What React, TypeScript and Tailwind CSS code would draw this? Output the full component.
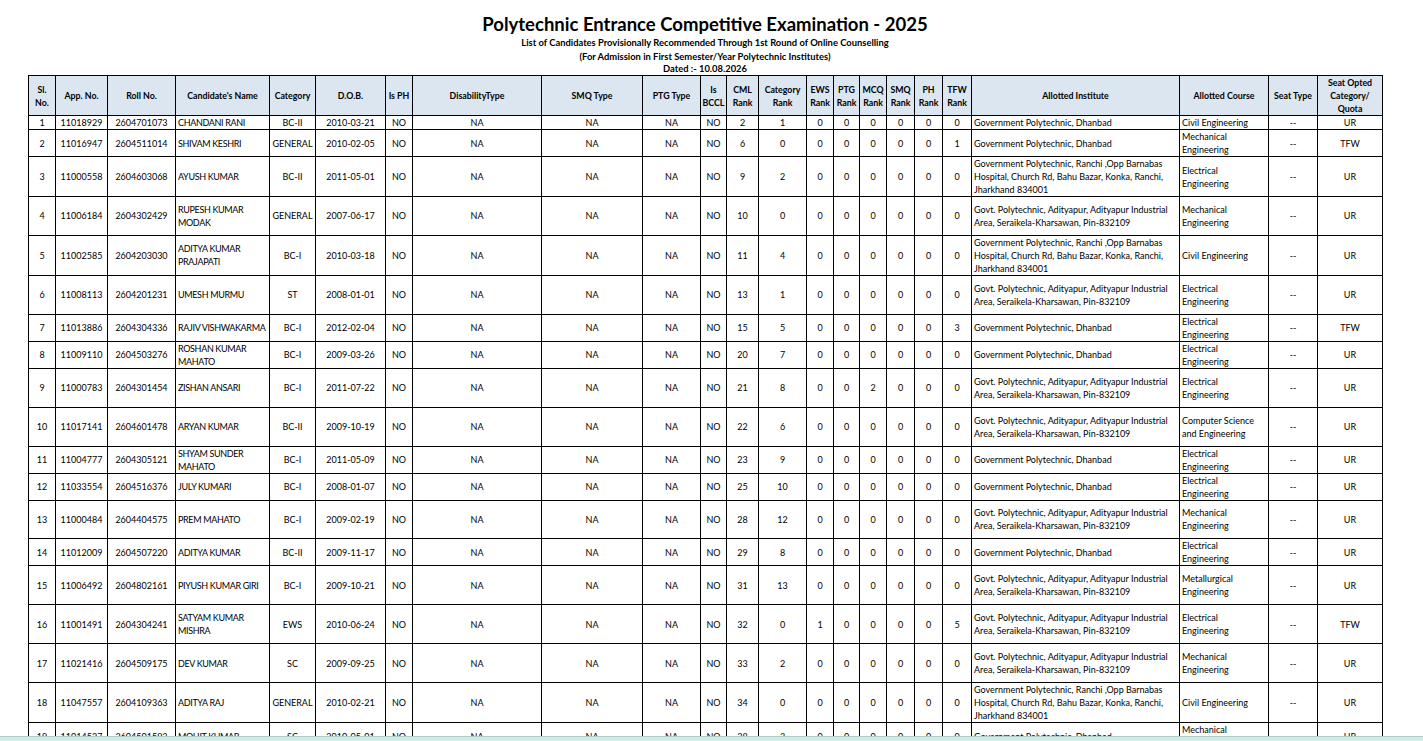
import React from "react";

type Col = { w: string; a: "c" | "l" };

const cols: Col[] = [
  { w: "w-[27px]", a: "c" },
  { w: "w-[52px]", a: "c" },
  { w: "w-[68px]", a: "c" },
  { w: "w-[94px]", a: "l" },
  { w: "w-[46px]", a: "c" },
  { w: "w-[70px]", a: "c" },
  { w: "w-[27px]", a: "c" },
  { w: "w-[129px]", a: "c" },
  { w: "w-[101px]", a: "c" },
  { w: "w-[58px]", a: "c" },
  { w: "w-[26px]", a: "c" },
  { w: "w-[32px]", a: "c" },
  { w: "w-[48px]", a: "c" },
  { w: "w-[27px]", a: "c" },
  { w: "w-[26px]", a: "c" },
  { w: "w-[27px]", a: "c" },
  { w: "w-[28px]", a: "c" },
  { w: "w-[28px]", a: "c" },
  { w: "w-[29px]", a: "c" },
  { w: "w-[208px]", a: "l" },
  { w: "w-[89px]", a: "l" },
  { w: "w-[49px]", a: "c" },
  { w: "w-[65px]", a: "c" },
];

const headers = [
  "Sl.\nNo.",
  "App. No.",
  "Roll No.",
  "Candidate's Name",
  "Category",
  "D.O.B.",
  "Is PH",
  "DisabilityType",
  "SMQ Type",
  "PTG Type",
  "Is\nBCCL",
  "CML\nRank",
  "Category\nRank",
  "EWS\nRank",
  "PTG\nRank",
  "MCQ\nRank",
  "SMQ\nRank",
  "PH\nRank",
  "TFW\nRank",
  "Allotted Institute",
  "Allotted Course",
  "Seat Type",
  "Seat Opted\nCategory/\nQuota",
];

const D = "Government Polytechnic, Dhanbad";
const R =
  "Government Polytechnic, Ranchi ,Opp Barnabas\nHospital, Church Rd, Bahu Bazar, Konka, Ranchi,\nJharkhand 834001";
const A =
  "Govt. Polytechnic, Adityapur, Adityapur Industrial\nArea, Seraikela-Kharsawan, Pin-832109";

const CIV = "Civil Engineering";
const MECH = "Mechanical\nEngineering";
const ELEC = "Electrical\nEngineering";
const CSE = "Computer Science\nand Engineering";
const MET = "Metallurgical\nEngineering";

type Row = {
  h: 1 | 2 | 3;
  sl: string;
  app: string;
  roll: string;
  name: string;
  cat: string;
  dob: string;
  cml: string;
  crank: string;
  ranks: string[];
  inst: string;
  course: string;
  quota: string;
};

const rows: Row[] = [
  { h: 1, sl: "1", app: "11018929", roll: "2604701073", name: "CHANDANI RANI", cat: "BC-II", dob: "2010-03-21", cml: "2", crank: "1", ranks: ["0", "0", "0", "0", "0", "0"], inst: D, course: CIV, quota: "UR" },
  { h: 2, sl: "2", app: "11016947", roll: "2604511014", name: "SHIVAM KESHRI", cat: "GENERAL", dob: "2010-02-05", cml: "6", crank: "0", ranks: ["0", "0", "0", "0", "0", "1"], inst: D, course: MECH, quota: "TFW" },
  { h: 3, sl: "3", app: "11000558", roll: "2604603068", name: "AYUSH KUMAR", cat: "BC-II", dob: "2011-05-01", cml: "9", crank: "2", ranks: ["0", "0", "0", "0", "0", "0"], inst: R, course: ELEC, quota: "UR" },
  { h: 3, sl: "4", app: "11006184", roll: "2604302429", name: "RUPESH KUMAR\nMODAK", cat: "GENERAL", dob: "2007-06-17", cml: "10", crank: "0", ranks: ["0", "0", "0", "0", "0", "0"], inst: A, course: MECH, quota: "UR" },
  { h: 3, sl: "5", app: "11002585", roll: "2604203030", name: "ADITYA KUMAR\nPRAJAPATI", cat: "BC-I", dob: "2010-03-18", cml: "11", crank: "4", ranks: ["0", "0", "0", "0", "0", "0"], inst: R, course: CIV, quota: "UR" },
  { h: 3, sl: "6", app: "11008113", roll: "2604201231", name: "UMESH MURMU", cat: "ST", dob: "2008-01-01", cml: "13", crank: "1", ranks: ["0", "0", "0", "0", "0", "0"], inst: A, course: ELEC, quota: "UR" },
  { h: 2, sl: "7", app: "11013886", roll: "2604304336", name: "RAJIV VISHWAKARMA", cat: "BC-I", dob: "2012-02-04", cml: "15", crank: "5", ranks: ["0", "0", "0", "0", "0", "3"], inst: D, course: ELEC, quota: "TFW" },
  { h: 2, sl: "8", app: "11009110", roll: "2604503276", name: "ROSHAN KUMAR\nMAHATO", cat: "BC-I", dob: "2009-03-26", cml: "20", crank: "7", ranks: ["0", "0", "0", "0", "0", "0"], inst: D, course: ELEC, quota: "UR" },
  { h: 3, sl: "9", app: "11000783", roll: "2604301454", name: "ZISHAN ANSARI", cat: "BC-I", dob: "2011-07-22", cml: "21", crank: "8", ranks: ["0", "0", "2", "0", "0", "0"], inst: A, course: ELEC, quota: "UR" },
  { h: 3, sl: "10", app: "11017141", roll: "2604601478", name: "ARYAN KUMAR", cat: "BC-II", dob: "2009-10-19", cml: "22", crank: "6", ranks: ["0", "0", "0", "0", "0", "0"], inst: A, course: CSE, quota: "UR" },
  { h: 2, sl: "11", app: "11004777", roll: "2604305121", name: "SHYAM SUNDER\nMAHATO", cat: "BC-I", dob: "2011-05-09", cml: "23", crank: "9", ranks: ["0", "0", "0", "0", "0", "0"], inst: D, course: ELEC, quota: "UR" },
  { h: 2, sl: "12", app: "11033554", roll: "2604516376", name: "JULY KUMARI", cat: "BC-I", dob: "2008-01-07", cml: "25", crank: "10", ranks: ["0", "0", "0", "0", "0", "0"], inst: D, course: ELEC, quota: "UR" },
  { h: 3, sl: "13", app: "11000484", roll: "2604404575", name: "PREM MAHATO", cat: "BC-I", dob: "2009-02-19", cml: "28", crank: "12", ranks: ["0", "0", "0", "0", "0", "0"], inst: A, course: MECH, quota: "UR" },
  { h: 2, sl: "14", app: "11012009", roll: "2604507220", name: "ADITYA KUMAR", cat: "BC-II", dob: "2009-11-17", cml: "29", crank: "8", ranks: ["0", "0", "0", "0", "0", "0"], inst: D, course: ELEC, quota: "UR" },
  { h: 3, sl: "15", app: "11006492", roll: "2604802161", name: "PIYUSH KUMAR GIRI", cat: "BC-I", dob: "2009-10-21", cml: "31", crank: "13", ranks: ["0", "0", "0", "0", "0", "0"], inst: A, course: MET, quota: "UR" },
  { h: 3, sl: "16", app: "11001491", roll: "2604304241", name: "SATYAM KUMAR\nMISHRA", cat: "EWS", dob: "2010-06-24", cml: "32", crank: "0", ranks: ["1", "0", "0", "0", "0", "5"], inst: A, course: ELEC, quota: "TFW" },
  { h: 3, sl: "17", app: "11021416", roll: "2604509175", name: "DEV KUMAR", cat: "SC", dob: "2009-09-25", cml: "33", crank: "2", ranks: ["0", "0", "0", "0", "0", "0"], inst: A, course: MECH, quota: "UR" },
  { h: 3, sl: "18", app: "11047557", roll: "2604109363", name: "ADITYA RAJ", cat: "GENERAL", dob: "2010-02-21", cml: "34", crank: "0", ranks: ["0", "0", "0", "0", "0", "0"], inst: R, course: CIV, quota: "UR" },
  { h: 2, sl: "19", app: "11014527", roll: "2604501593", name: "MOHIT KUMAR", cat: "SC", dob: "2010-05-01", cml: "38", crank: "3", ranks: ["0", "0", "0", "0", "0", "0"], inst: D, course: MECH, quota: "UR" },
];

const heightCls = {
  1: "h-[12.6px]",
  2: "h-[25.75px]",
  3: "h-[38.88px]",
} as const;

function cellsOf(r: Row): string[] {
  return [
    r.sl,
    r.app,
    r.roll,
    r.name,
    r.cat,
    r.dob,
    "NO",
    "NA",
    "NA",
    "NA",
    "NO",
    r.cml,
    r.crank,
    ...r.ranks,
    r.inst,
    r.course,
    "--",
    r.quota,
  ];
}

export default function App() {
  return (
    <div
      className="relative h-[741px] w-[1423px] overflow-hidden bg-white text-black"
      style={{ fontFamily: "Lato, 'Open Sans', sans-serif" }}
    >
      <div className="w-[1410px] pt-[12px] text-center">
        <h1 className="text-[18.5px] font-bold leading-[24px]">
          Polytechnic Entrance Competitive Examination - 2025
        </h1>
        <p className="text-[9.4px] font-bold leading-[13.5px]">
          List of Candidates Provisionally Recommended Through 1st Round of Online Counselling
        </p>
        <p className="text-[9.4px] font-bold leading-[13.5px]">
          (For Admission in First Semester/Year Polytechnic Institutes)
        </p>
        <p className="text-[9.4px] font-bold leading-[12px]">Dated :- 10.08.2026</p>
      </div>

      <table className="ml-[28px] w-[1354px] table-fixed border-collapse text-[9px]">
        <colgroup>
          {cols.map((c, i) => (
            <col key={i} className={c.w} />
          ))}
        </colgroup>
        <thead>
          <tr className="h-[39.5px] bg-[#dce6f1]">
            {headers.map((h, i) => (
              <th
                key={i}
                className="overflow-hidden whitespace-pre border border-black p-0 text-center align-middle text-[8.8px] font-bold leading-[13px]"
              >
                {h}
              </th>
            ))}
          </tr>
        </thead>
        <tbody>
          {rows.map((r, ri) => (
            <tr key={ri} className={heightCls[r.h]}>
              {cellsOf(r).map((v, ci) => (
                <td
                  key={ci}
                  className={
                    "overflow-hidden whitespace-pre border border-black py-0 align-middle leading-[13px] " +
                    (ci === 3
                      ? "pl-[2px] pr-0 text-left tracking-[-0.35px]"
                      : cols[ci].a === "l"
                        ? "pl-[2px] pr-0 text-left"
                        : "px-0 text-center")
                  }
                >
                  {v}
                </td>
              ))}
            </tr>
          ))}
        </tbody>
      </table>

      <div className="fixed bottom-0 left-0 right-0 h-[5px] border-t border-[#b3ccc6] bg-[#cdeee6]" />
    </div>
  );
}
